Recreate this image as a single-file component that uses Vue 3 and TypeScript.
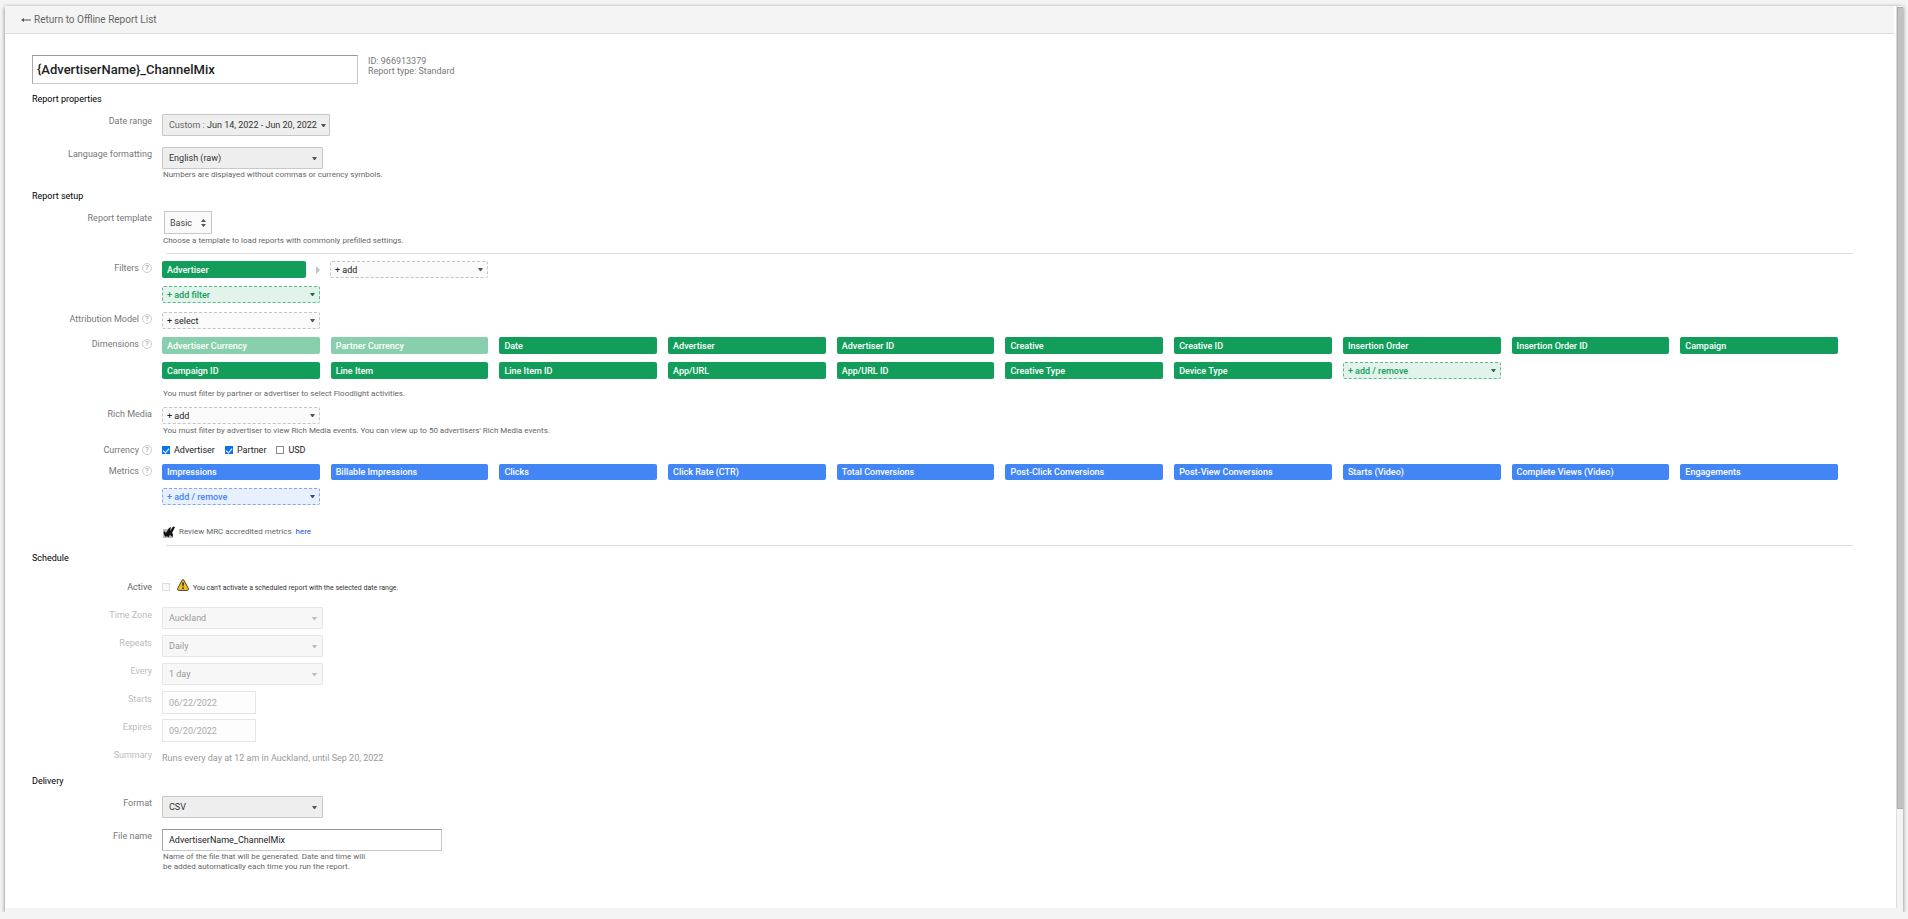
<script setup lang="ts">
import { ref } from 'vue'

const reportName = ref('{AdvertiserName}_ChannelMix')
const fileName = ref('AdvertiserName_ChannelMix')

interface Chip {
  label: string
  locked?: boolean
}

const dimensions: Chip[] = [
  { label: 'Advertiser Currency', locked: true },
  { label: 'Partner Currency', locked: true },
  { label: 'Date' },
  { label: 'Advertiser' },
  { label: 'Advertiser ID' },
  { label: 'Creative' },
  { label: 'Creative ID' },
  { label: 'Insertion Order' },
  { label: 'Insertion Order ID' },
  { label: 'Campaign' },
  { label: 'Campaign ID' },
  { label: 'Line Item' },
  { label: 'Line Item ID' },
  { label: 'App/URL' },
  { label: 'App/URL ID' },
  { label: 'Creative Type' },
  { label: 'Device Type' },
]

const metrics: string[] = [
  'Impressions',
  'Billable Impressions',
  'Clicks',
  'Click Rate (CTR)',
  'Total Conversions',
  'Post-Click Conversions',
  'Post-View Conversions',
  'Starts (Video)',
  'Complete Views (Video)',
  'Engagements',
]

const currencies = ref([
  { label: 'Advertiser', checked: true },
  { label: 'Partner', checked: true },
  { label: 'USD', checked: false },
])

const scheduleSelects = [
  { id: 'time-zone', label: 'Time Zone', value: 'Auckland' },
  { id: 'repeats', label: 'Repeats', value: 'Daily' },
  { id: 'every', label: 'Every', value: '1 day' },
]

const scheduleDates = [
  { id: 'starts', label: 'Starts', value: '06/22/2022' },
  { id: 'expires', label: 'Expires', value: '09/20/2022' },
]
</script>

<template>
  <div class="panel">
    <main class="content">
      <header class="topbar">
        <a href="#" class="back">
          <svg class="back-arrow" viewBox="0 0 10 6" aria-hidden="true">
            <path d="M0 3 L3 1 V2.5 H10 V3.5 H3 V5 Z" fill="#555" />
          </svg>
          Return to Offline Report List
        </a>
      </header>

      <form class="form" @submit.prevent>
        <div class="title-row">
          <input v-model="reportName" class="title-input" type="text" aria-label="Report name" />
          <div class="meta">
            <div>ID: 966913379</div>
            <div>Report type: Standard</div>
          </div>
        </div>

        <section class="section">
          <h2>Report properties</h2>
          <div class="row">
            <span id="date-label" class="label">Date range</span>
            <div>
              <button type="button" class="box date-button" aria-labelledby="date-label">
                <span><span class="muted">Custom :</span> Jun 14, 2022 - Jun 20, 2022</span>
                <i class="caret"></i>
              </button>
            </div>
          </div>
          <div class="row">
            <label class="label" for="language">Language formatting</label>
            <div>
              <span class="select-wrap">
                <select id="language" class="box"><option>English (raw)</option></select>
                <i class="caret"></i>
              </span>
              <p class="note">Numbers are displayed without commas or currency symbols.</p>
            </div>
          </div>
        </section>

        <section class="section setup">
          <h2>Report setup</h2>
          <div class="row">
            <span id="template-label" class="label">Report template</span>
            <div>
              <button type="button" class="template-button" aria-labelledby="template-label">
                <span>Basic</span>
                <svg viewBox="0 0 5 8" aria-hidden="true">
                  <path d="M2.5 0 L5 3 H0 Z M0 5 H5 L2.5 8 Z" fill="#555" />
                </svg>
              </button>
              <p class="note note-spaced">Choose a template to load reports with commonly prefilled settings.</p>
            </div>
          </div>
          <hr class="rule" />
          <div class="row row-filters">
            <span class="label">Filters <button type="button" class="help" aria-label="Help with filters">?</button></span>
            <div>
              <div class="filter-line">
                <button type="button" class="chip green filter-chip">Advertiser</button>
                <svg class="chevron" viewBox="0 0 4 8" aria-hidden="true">
                  <path d="M0 0 L4 4 L0 8 Z" fill="#c4c4c4" />
                </svg>
                <button type="button" class="chip add plain">+ add<i class="caret"></i></button>
              </div>
              <button type="button" class="chip add add-green next-line">+ add filter<i class="caret"></i></button>
            </div>
          </div>
          <div class="row row-attribution">
            <span class="label">Attribution Model <button type="button" class="help" aria-label="Help with attribution model">?</button></span>
            <div><button type="button" class="chip add plain">+ select<i class="caret"></i></button></div>
          </div>
          <div class="row">
            <span class="label">Dimensions <button type="button" class="help" aria-label="Help with dimensions">?</button></span>
            <div>
              <div class="chips">
                <button
                  v-for="item in dimensions"
                  :key="item.label"
                  type="button"
                  class="chip green"
                  :class="{ locked: item.locked }"
                >{{ item.label }}</button>
                <button type="button" class="chip add add-green">+ add / remove<i class="caret"></i></button>
              </div>
              <p class="note dimension-note">You must filter by partner or advertiser to select Floodlight activities.</p>
            </div>
          </div>
          <div class="row row-tight">
            <span class="label">Rich Media</span>
            <div>
              <button type="button" class="chip add plain" aria-label="Add rich media">+ add<i class="caret"></i></button>
              <p class="note note-spaced">You must filter by advertiser to view Rich Media events. You can view up to 50 advertisers' Rich Media events.</p>
            </div>
          </div>
          <div class="row row-currency">
            <span class="label">Currency <button type="button" class="help" aria-label="Help with currency">?</button></span>
            <div class="checks">
              <label v-for="item in currencies" :key="item.label" class="check">
                <input v-model="item.checked" type="checkbox" />{{ item.label }}
              </label>
            </div>
          </div>
          <div class="row row-tight">
            <span class="label">Metrics <button type="button" class="help" aria-label="Help with metrics">?</button></span>
            <div>
              <div class="chips">
                <button v-for="name in metrics" :key="name" type="button" class="chip blue">{{ name }}</button>
                <button type="button" class="chip add add-blue">+ add / remove<i class="caret"></i></button>
              </div>
              <div class="mrc">
                <svg viewBox="0 0 12 12" aria-hidden="true">
                  <path d="M0 3 H5 V12 H0 Z M5 8 H10 V12 H5 Z" fill="#bbb" />
                  <path d="M0.5 7 L1.5 5 L3 7 L6 2 L8 1 L7 5 L10 0.5 L12 1 L9 7 L10 8 L9.5 11 L8 10 L7 8.5 L5.5 11.5 L4 10 L2.5 11 L1.5 9.5 Z" fill="#111" />
                </svg>
                <span>Review MRC accredited metrics</span>
                <a href="#">here</a>
              </div>
            </div>
          </div>
          <hr class="rule rule-last" />
        </section>

        <section class="section schedule">
          <h2>Schedule</h2>
          <div class="row row-active">
            <label class="label" for="active">Active</label>
            <div class="active-line">
              <input id="active" type="checkbox" disabled />
              <svg viewBox="0 0 12 12" aria-hidden="true">
                <path d="M5.2 1 Q6 0 6.8 1 L11.4 9.6 Q11.8 11.3 10.6 11.4 H1.4 Q0.2 11.3 0.6 9.6 Z" fill="#f2c21a" stroke="#444" stroke-width="1" />
                <path d="M5.1 3.5 H6.9 L6.5 7.6 H5.5 Z M5.2 8.5 H6.8 V10 H5.2 Z" fill="#222" />
              </svg>
              <span class="warning">You can't activate a scheduled report with the selected date range.</span>
            </div>
          </div>
          <div v-for="field in scheduleSelects" :key="field.id" class="row off">
            <label class="label" :for="field.id">{{ field.label }}</label>
            <div>
              <span class="select-wrap">
                <select :id="field.id" class="box" disabled><option>{{ field.value }}</option></select>
                <i class="caret"></i>
              </span>
            </div>
          </div>
          <div v-for="field in scheduleDates" :key="field.id" class="row row-date off">
            <label class="label" :for="field.id">{{ field.label }}</label>
            <div><input :id="field.id" class="text-input date-input" type="text" :value="field.value" disabled /></div>
          </div>
          <div class="row off">
            <span class="label">Summary</span>
            <div class="summary">Runs every day at 12 am in Auckland, until Sep 20, 2022</div>
          </div>
        </section>

        <section class="section delivery">
          <h2>Delivery</h2>
          <div class="row">
            <label class="label" for="format">Format</label>
            <div>
              <span class="select-wrap">
                <select id="format" class="box"><option>CSV</option></select>
                <i class="caret"></i>
              </span>
            </div>
          </div>
          <div class="row">
            <label class="label" for="file-name">File name</label>
            <div>
              <input id="file-name" v-model="fileName" class="text-input file-input" type="text" />
              <p class="note file-note">Name of the file that will be generated. Date and time will be added automatically each time you run the report.</p>
            </div>
          </div>
        </section>
      </form>
    </main>
    <div class="track" aria-hidden="true"><div class="thumb"></div></div>
  </div>
</template>

<style>
html,
body {
  background: #f4f4f4;
}
body {
  margin: 0;
}
#app {
  display: flow-root;
}
</style>

<style scoped>
* {
  box-sizing: border-box;
}
.panel {
  display: flex;
  min-height: calc(100vh - 13px);
  margin: 6px 5px 0;
  background: #fff;
  border-bottom: 4px solid #f4f4f4;
  box-shadow: 0 1px 4px rgba(0, 0, 0, 0.5);
  font-family: Roboto, 'Liberation Sans', sans-serif;
  font-size: 9px;
  line-height: 12px;
  color: #222;
}
button,
input,
select {
  font: inherit;
  margin: 0;
}
.content {
  flex: 1;
  min-width: 0;
  margin-right: 2px;
}
.track {
  width: 7px;
  background: #f4f4f4;
  border-left: 1px solid #ddd;
  padding-top: 1px;
}
.thumb {
  height: 89%;
  background: #c2c2c2;
  border: 1px solid #adadad;
  border-right: 0;
}
.topbar {
  display: flex;
  align-items: center;
  height: 28px;
  padding-left: 16px;
  background: #f4f4f4;
  border-bottom: 1px solid #ddd;
}
.back {
  display: flex;
  align-items: center;
  gap: 3px;
  color: #666;
  font-size: 10px;
  text-decoration: none;
}
.back-arrow {
  width: 10px;
  height: 6px;
}
.form {
  padding: 21px 41px 24px 27px;
}
.title-row {
  display: flex;
  gap: 10px;
}
.title-input {
  width: 326px;
  height: 29px;
  padding: 0 4px;
  border: 1px solid #c8c8c8;
  border-top-color: #999;
  border-left-color: #aaa;
  color: #222;
  font-size: 13px;
  font-weight: 500;
}
.meta {
  padding-top: 1px;
  color: #777;
  line-height: 10px;
}
.section {
  display: flex;
  flex-direction: column;
  margin-top: 9px;
}
.schedule,
.delivery {
  margin-top: 6px;
}
h2 {
  margin: 0 0 9px;
  color: #000;
  font-size: 9px;
  font-weight: 400;
  line-height: 12px;
}
p {
  margin: 0;
}
.row {
  display: grid;
  grid-template-columns: 120px minmax(0, 1fr);
  column-gap: 10px;
  align-items: start;
}
.row > div {
  display: flex;
  flex-direction: column;
  align-items: flex-start;
}
.row + .row {
  margin-top: 11px;
}
.setup .row-attribution {
  margin-top: 9px;
}
.setup .row-attribution + .row {
  margin-top: 8px;
}
.setup .row-tight {
  margin-top: 7px;
}
.setup .row-currency {
  margin-top: 6px;
}
.schedule .row + .row {
  margin-top: 6px;
}
.label {
  display: flex;
  justify-content: flex-end;
  align-items: center;
  gap: 3px;
  height: 14px;
  color: #777;
}
.schedule .label {
  height: 16px;
}
.help {
  width: 10px;
  height: 10px;
  padding: 0;
  border: 1px solid #ccc;
  border-radius: 50%;
  background: #fff;
  color: #999;
  font-size: 8px;
  line-height: 8px;
}
.box {
  appearance: none;
  width: 161px;
  height: 22px;
  padding: 0 6px;
  border: 1px solid #c8c8c8;
  border-radius: 1px;
  background: #eee;
  color: #333;
  opacity: 1;
  text-align: left;
  white-space: nowrap;
}
.date-button {
  display: flex;
  align-items: center;
  justify-content: space-between;
  gap: 4px;
  width: auto;
  min-width: 166px;
  padding-right: 3px;
}
.muted {
  color: #666;
}
.caret {
  flex: none;
  width: 1px;
  height: 0;
  border: 2px solid transparent;
  border-top: 3px solid #555;
  border-bottom: 0;
  box-sizing: content-box;
}
.select-wrap {
  position: relative;
  display: flex;
}
.select-wrap .caret {
  position: absolute;
  top: 10px;
  right: 6px;
  pointer-events: none;
}
.note {
  margin-left: 1px;
  color: #666;
  font-size: 8px;
  line-height: 12px;
}
.note-spaced {
  margin-top: 1px;
}
.template-button {
  display: flex;
  align-items: center;
  justify-content: space-between;
  width: 48px;
  height: 23px;
  margin-left: 2px;
  padding: 0 5px;
  border: 1px solid #c8c8c8;
  background: #fafafa;
  color: #444;
}
.template-button svg {
  width: 5px;
  height: 8px;
}
.rule {
  align-self: stretch;
  height: 1px;
  margin: 6px 0 7px 134px;
  border: 0;
  background: #ddd;
}
.rule-last {
  margin-bottom: 0;
}
.chip {
  display: flex;
  align-items: center;
  justify-content: space-between;
  width: 158px;
  height: 17px;
  padding: 0 5px;
  border: 0;
  border-radius: 2px;
  font-weight: 500;
  white-space: nowrap;
}
.green {
  background: #129e5a;
  color: #fff;
}
.green.locked {
  background: #88cfad;
}
.blue {
  height: 16px;
  background: #4285f4;
  color: #fff;
}
.add {
  padding: 0 4px;
}
.plain {
  border: 1px dashed #c4c4c4;
  background: #fafafa;
  color: #222;
  font-weight: 400;
}
.add-green {
  border: 1px dashed #5abb8c;
  background: #e2f3eb;
  color: #129e5a;
}
.add-green .caret {
  border-top-color: #2f6f3a;
}
.add-blue {
  border: 1px dashed #82aaf2;
  background: #e8effd;
  color: #4285f4;
}
.add-blue .caret {
  border-top-color: #2750a0;
}
.filter-line {
  display: flex;
  align-items: center;
  gap: 10px;
}
.filter-chip {
  width: 144px;
}
.chevron {
  width: 4px;
  height: 8px;
}
.next-line {
  margin-top: 8px;
}
.chips {
  display: grid;
  grid-template-columns: repeat(auto-fill, minmax(150px, 1fr));
  gap: 8px 11px;
  align-self: stretch;
  padding-right: 15px;
}
.chips .chip {
  width: auto;
}
.dimension-note {
  margin-top: 9px;
}
.row > .checks {
  flex-direction: row;
  gap: 10px;
}
.check {
  display: flex;
  align-items: center;
  gap: 4px;
  height: 14px;
}
input[type='checkbox'] {
  appearance: none;
  display: grid;
  place-items: center;
  width: 8px;
  height: 8px;
  border: 1px solid #888;
  background: #fff;
}
input[type='checkbox']:checked {
  border-color: #0b72f0;
  background: #0b72f0;
}
input[type='checkbox']:checked::before {
  content: '';
  width: 3px;
  height: 5px;
  margin-bottom: 1px;
  border: solid #fff;
  border-width: 0 1px 1px 0;
  transform: rotate(40deg);
}
input[type='checkbox']:disabled {
  border-color: #ddd;
  background: #f8f8f8;
}
.mrc {
  display: flex;
  align-items: center;
  gap: 4px;
  height: 14px;
  margin: 20px 0 0 1px;
  color: #666;
  font-size: 8px;
}
.mrc svg {
  width: 12px;
  height: 12px;
}
.mrc a {
  color: #15c;
  text-decoration: none;
}
.row-active .label {
  height: 28px;
  color: #666;
}
.row > .active-line {
  flex-direction: row;
  align-items: center;
  height: 28px;
}
.active-line svg {
  width: 12px;
  height: 12px;
  margin: 0 4px 4px 7px;
}
.warning {
  padding-top: 2px;
  color: #333;
  font-size: 7px;
}
.text-input {
  padding: 0 6px;
  border: 1px solid #c8c8c8;
  border-top-color: #999;
  border-left-color: #aaa;
  background: #fff;
  color: #222;
}
.date-input {
  width: 94px;
  height: 23px;
}
.schedule .row-date + .row {
  margin-top: 5px;
}
.file-input {
  width: 280px;
  height: 22px;
}
.file-note {
  max-width: 208px;
  margin-top: 1px;
  line-height: 10px;
}
.off .label {
  color: #bbb;
}
.off .box {
  border-color: #e6e6e6;
  background: #f7f7f7;
  color: #999;
}
.off .caret {
  border-top-color: #bbb;
}
.off .text-input {
  border-color: #e6e6e6;
  background: #fdfdfd;
  color: #aaa;
}
.summary {
  color: #999;
  line-height: 22px;
}
</style>
